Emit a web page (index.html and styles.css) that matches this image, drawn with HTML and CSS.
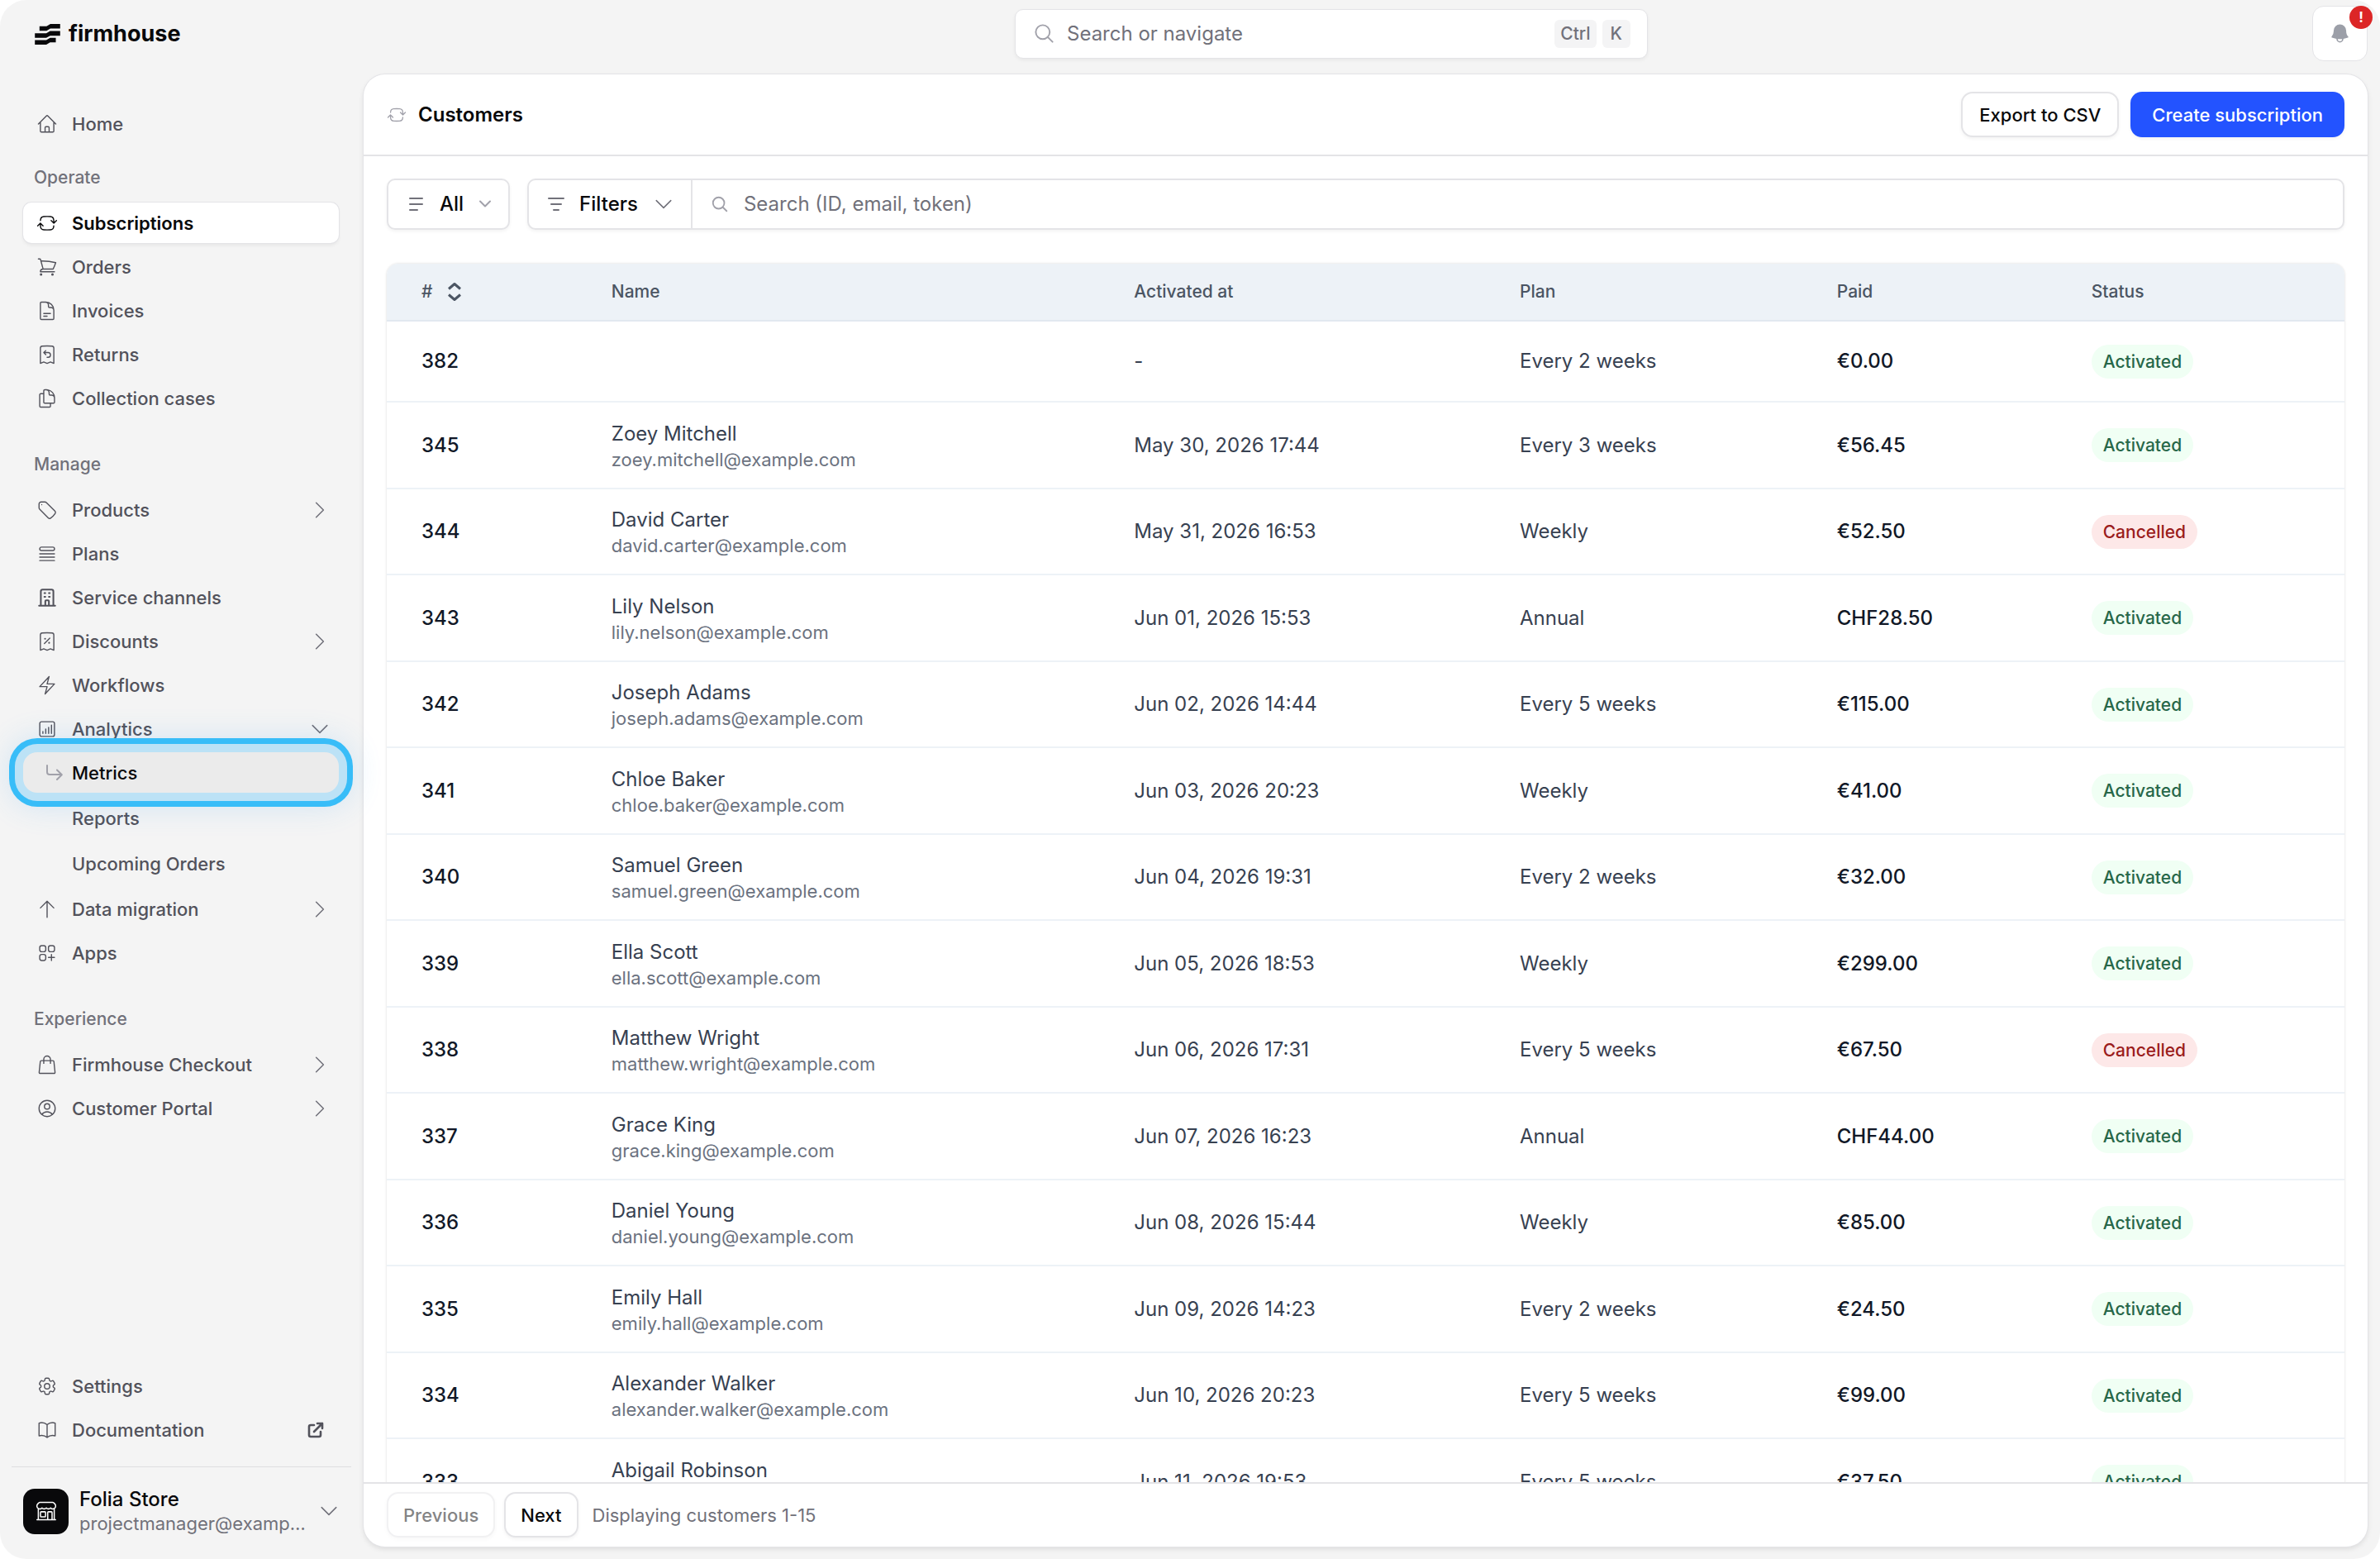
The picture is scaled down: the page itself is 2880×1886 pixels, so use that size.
FILE: index.html
```html
<!DOCTYPE html>
<html lang="en">
<head>
<meta charset="utf-8">
<title>Customers</title>
<meta name="viewport" content="width=device-width, initial-scale=1">
<link rel="stylesheet" href="styles.css">
</head>
<body>
<svg class="sprite" aria-hidden="true">
  <symbol id="i-home" viewBox="0 0 24 24"><path d="m2.25 12 8.954-8.955c.44-.439 1.152-.439 1.591 0L21.75 12M4.5 9.75v10.125c0 .621.504 1.125 1.125 1.125H9.75v-4.875c0-.621.504-1.125 1.125-1.125h2.25c.621 0 1.125.504 1.125 1.125V21h4.125c.621 0 1.125-.504 1.125-1.125V9.75M8.25 21h8.25"/></symbol>
  <symbol id="i-cycle" viewBox="0 0 24 24"><path d="M19.5 12c0-1.232-.046-2.453-.138-3.662a4.006 4.006 0 0 0-3.7-3.7 48.678 48.678 0 0 0-7.324 0 4.006 4.006 0 0 0-3.7 3.7c-.017.22-.032.441-.046.662M19.5 12l3-3m-3 3-3-3m-12 3c0 1.232.046 2.453.138 3.662a4.006 4.006 0 0 0 3.7 3.7 48.656 48.656 0 0 0 7.324 0 4.006 4.006 0 0 0 3.7-3.7c.017-.22.032-.441.046-.662M4.5 12l3 3m-3-3-3 3"/></symbol>
  <symbol id="i-cart" viewBox="0 0 24 24"><path d="M2.25 3h1.386c.51 0 .955.343 1.087.835l.383 1.437M7.5 14.25a3 3 0 0 0-3 3h15.75m-12.75-3h11.218c1.121-2.3 2.1-4.684 2.924-7.138a60.114 60.114 0 0 0-16.536-1.84M7.5 14.25 5.106 5.272M6 20.25a.75.75 0 1 1-1.5 0 .75.75 0 0 1 1.5 0Zm12.75 0a.75.75 0 1 1-1.5 0 .75.75 0 0 1 1.5 0Z"/></symbol>
  <symbol id="i-doc" viewBox="0 0 24 24"><path d="M19.5 14.25v-2.625a3.375 3.375 0 0 0-3.375-3.375h-1.5A1.125 1.125 0 0 1 13.5 7.125v-1.5a3.375 3.375 0 0 0-3.375-3.375H8.25m0 12.75h7.5m-7.5 3H12M10.5 2.25H5.625c-.621 0-1.125.504-1.125 1.125v17.25c0 .621.504 1.125 1.125 1.125h12.75c.621 0 1.125-.504 1.125-1.125V11.25a9 9 0 0 0-9-9Z"/></symbol>
  <symbol id="i-refund" viewBox="0 0 24 24"><path d="M8.25 9.75h4.875a2.625 2.625 0 0 1 0 5.25H12M8.25 9.75 10.5 7.5M8.25 9.75 10.5 12m9-7.243V21.75l-3.75-1.5-3.75 1.5-3.75-1.5-3.75 1.5V4.757c0-1.108.806-2.057 1.907-2.185a48.507 48.507 0 0 1 11.186 0c1.1.128 1.907 1.077 1.907 2.185Z"/></symbol>
  <symbol id="i-docs" viewBox="0 0 24 24"><path d="M15.75 17.25v3.375c0 .621-.504 1.125-1.125 1.125h-9.75a1.125 1.125 0 0 1-1.125-1.125V7.875c0-.621.504-1.125 1.125-1.125H6.75a9.06 9.06 0 0 1 1.5.124m7.5 10.376h3.375c.621 0 1.125-.504 1.125-1.125V11.25c0-4.46-3.243-8.161-7.5-8.876a9.06 9.06 0 0 0-1.5-.124H9.375c-.621 0-1.125.504-1.125 1.125v3.5m7.5 10.375H9.375a1.125 1.125 0 0 1-1.125-1.125v-9.25m12 6.625v-1.875a3.375 3.375 0 0 0-3.375-3.375h-1.5a1.125 1.125 0 0 1-1.125-1.125v-1.5a3.375 3.375 0 0 0-3.375-3.375H9.75"/></symbol>
  <symbol id="i-tag" viewBox="0 0 24 24"><path d="M9.568 3H5.25A2.25 2.25 0 0 0 3 5.25v4.318c0 .597.237 1.17.659 1.591l9.581 9.581c.699.699 1.78.872 2.607.33a18.095 18.095 0 0 0 5.223-5.223c.542-.827.369-1.908-.33-2.607L11.16 3.66A2.25 2.25 0 0 0 9.568 3Z"/><path d="M6 6h.008v.008H6V6Z"/></symbol>
  <symbol id="i-list" viewBox="0 0 24 24"><path d="M3.75 12h16.5m-16.5 3.75h16.5M3.75 19.5h16.5M5.625 4.5h12.75a1.875 1.875 0 0 1 0 3.75H5.625a1.875 1.875 0 0 1 0-3.75Z"/></symbol>
  <symbol id="i-office" viewBox="0 0 24 24"><path stroke-width="1.9" d="M19 21V5a2 2 0 0 0-2-2H7a2 2 0 0 0-2 2v16m14 0h2m-2 0h-5m-9 0H3m2 0h5M9 7h1m-1 4h1m4-4h1m-1 4h1m-5 10v-5a1 1 0 0 1 1-1h2a1 1 0 0 1 1 1v5m-4 0h4"/></symbol>
  <symbol id="i-percent" viewBox="0 0 24 24"><path d="m9 14.25 6-6m4.5-3.493V21.75l-3.75-1.5-3.75 1.5-3.75-1.5-3.75 1.5V4.757c0-1.108.806-2.057 1.907-2.185a48.507 48.507 0 0 1 11.186 0c1.1.128 1.907 1.077 1.907 2.185ZM9.75 9h.008v.008H9.75V9Zm.375 0a.375.375 0 1 1-.75 0 .375.375 0 0 1 .75 0Zm4.125 4.5h.008v.008h-.008V13.5Zm.375 0a.375.375 0 1 1-.75 0 .375.375 0 0 1 .75 0Z"/></symbol>
  <symbol id="i-bolt" viewBox="0 0 24 24"><path d="m3.75 13.5 10.5-11.25L12 10.5h8.25L9.75 21.75 12 13.5H3.75Z"/></symbol>
  <symbol id="i-chart" viewBox="0 0 24 24"><rect x="3.8" y="3.8" width="16.4" height="16.4" rx="2"/><path d="M7.3 14.8v2M10.5 12v4.8M13.7 10.2v6.6M16.9 7.6v9.2"/></symbol>
  <symbol id="i-sub" viewBox="0 0 20 20"><path stroke-width="2" d="M1 1v8a3 3 0 0 0 3 3h14.5M13 6.5l5.8 5.7L13 18"/></symbol>
  <symbol id="i-up" viewBox="0 0 24 24"><path d="M4.5 10.5 12 3l7.5 7.5M12 3v18"/></symbol>
  <symbol id="i-apps" viewBox="0 0 24 24"><path d="M13.5 16.875h3.375m0 0h3.375m-3.375 0V13.5m0 3.375v3.375M6 10.5h2.25a2.25 2.25 0 0 0 2.25-2.25V6a2.25 2.25 0 0 0-2.25-2.25H6A2.25 2.25 0 0 0 3.75 6v2.25A2.25 2.25 0 0 0 6 10.5Zm0 9.75h2.25A2.25 2.25 0 0 0 10.5 18v-2.25a2.25 2.25 0 0 0-2.25-2.25H6a2.25 2.25 0 0 0-2.25 2.25V18A2.25 2.25 0 0 0 6 20.25Zm9.75-9.75H18a2.25 2.25 0 0 0 2.25-2.25V6A2.25 2.25 0 0 0 18 3.75h-2.25A2.25 2.25 0 0 0 13.5 6v2.25a2.25 2.25 0 0 0 2.25 2.25Z"/></symbol>
  <symbol id="i-bag" viewBox="0 0 24 24"><path d="M15.75 10.5V6a3.75 3.75 0 1 0-7.5 0v4.5m11.356-1.993 1.263 12c.07.665-.45 1.243-1.119 1.243H4.25a1.125 1.125 0 0 1-1.12-1.243l1.264-12A1.125 1.125 0 0 1 5.513 7.5h12.974c.576 0 1.059.435 1.119 1.007Z"/></symbol>
  <symbol id="i-user" viewBox="0 0 24 24"><path d="M17.982 18.725A7.488 7.488 0 0 0 12 15.75a7.488 7.488 0 0 0-5.982 2.975m11.963 0a9 9 0 1 0-11.963 0m11.963 0A8.966 8.966 0 0 1 12 21a8.966 8.966 0 0 1-5.982-2.275M15 9.75a3 3 0 1 1-6 0 3 3 0 0 1 6 0Z"/></symbol>
  <symbol id="i-cog" viewBox="0 0 24 24"><path d="M9.594 3.94c.09-.542.56-.94 1.11-.94h2.593c.55 0 1.02.398 1.11.94l.213 1.281c.063.374.313.686.645.87.074.04.147.083.22.127.325.196.72.257 1.075.124l1.217-.456a1.125 1.125 0 0 1 1.37.49l1.296 2.247a1.125 1.125 0 0 1-.26 1.431l-1.003.827c-.293.241-.438.613-.43.992a7.723 7.723 0 0 1 0 .255c-.008.378.137.75.43.991l1.004.827c.424.35.534.955.26 1.43l-1.298 2.247a1.125 1.125 0 0 1-1.369.491l-1.217-.456c-.355-.133-.75-.072-1.076.124a6.47 6.47 0 0 1-.22.128c-.331.183-.581.495-.644.869l-.213 1.281c-.09.543-.56.94-1.11.94h-2.594c-.55 0-1.019-.398-1.11-.94l-.213-1.281c-.062-.374-.312-.686-.644-.87a6.52 6.52 0 0 1-.22-.127c-.325-.196-.72-.257-1.076-.124l-1.217.456a1.125 1.125 0 0 1-1.369-.49l-1.297-2.247a1.125 1.125 0 0 1 .26-1.431l1.004-.827c.292-.24.437-.613.43-.991a6.932 6.932 0 0 1 0-.255c.007-.38-.138-.751-.43-.992l-1.004-.827a1.125 1.125 0 0 1-.26-1.43l1.297-2.247a1.125 1.125 0 0 1 1.37-.491l1.216.456c.356.133.751.072 1.076-.124.072-.044.146-.086.22-.128.332-.183.582-.495.644-.869l.214-1.28Z"/><path d="M15 12a3 3 0 1 1-6 0 3 3 0 0 1 6 0Z"/></symbol>
  <symbol id="i-book" viewBox="0 0 24 24"><path d="M12 6.042A8.967 8.967 0 0 0 6 3.75c-1.052 0-2.062.18-3 .512v14.25A8.987 8.987 0 0 1 6 18c2.305 0 4.408.867 6 2.292m0-14.25a8.966 8.966 0 0 1 6-2.292c1.052 0 2.062.18 3 .512v14.25A8.987 8.987 0 0 0 18 18a8.967 8.967 0 0 0-6 2.292m0-14.25v14.25"/></symbol>
  <symbol id="i-external" viewBox="0 0 24 24"><path stroke-width="2.6" d="M10 6H6a2 2 0 0 0-2 2v10a2 2 0 0 0 2 2h10a2 2 0 0 0 2-2v-4M14 4h6m0 0v6m0-6L10 14"/></symbol>
  <symbol id="i-right" viewBox="0 0 24 24"><path d="m8.25 4.5 7.5 7.5-7.5 7.5"/></symbol>
  <symbol id="i-down" viewBox="0 0 24 24"><path d="m19.5 8.25-7.5 7.5-7.5-7.5"/></symbol>
  <symbol id="i-search" viewBox="0 0 24 24"><path d="m21 21-5.197-5.197m0 0A7.5 7.5 0 1 0 5.196 5.196a7.5 7.5 0 0 0 10.607 10.607Z"/></symbol>
  <symbol id="i-store" viewBox="0 0 24 24"><path d="M13.5 21v-7.5a.75.75 0 0 1 .75-.75h3a.75.75 0 0 1 .75.75V21m-4.5 0H2.36m11.14 0H18m0 0h3.64m-1.39 0V9.349M3.75 21V9.349m0 0a3.001 3.001 0 0 0 3.75-.615A2.993 2.993 0 0 0 9.75 9.75c.896 0 1.7-.393 2.25-1.016a2.993 2.993 0 0 0 2.25 1.016c.896 0 1.7-.393 2.25-1.015a3.001 3.001 0 0 0 3.75.614m-16.5 0a3.004 3.004 0 0 1-.621-4.72l1.189-1.19A1.5 1.5 0 0 1 5.378 3h13.243a1.5 1.5 0 0 1 1.06.44l1.19 1.189a3 3 0 0 1-.621 4.72M6.75 18h3.75a.75.75 0 0 0 .75-.75V13.5a.75.75 0 0 0-.75-.75H6.75a.75.75 0 0 0-.75.75v3.75c0 .414.336.75.75.75Z"/></symbol>
</svg>

<div class="app">
  <aside class="sidebar">
    <a class="brand" href="#" aria-label="firmhouse">
      <svg class="brand-mark" viewBox="126 85 93 76" aria-hidden="true"><path d="M143 93h26l14-8h36v17h-36l-14 8h-26zM126 119h42l14-8h37v17h-37l-14 8h-42zM126 144h42l14-8h21v17h-21l-14 8h-42z"/></svg>
      <span class="brand-name">firmhouse</span>
    </a>

    <nav class="nav" aria-label="Main">
      <div class="nav-group">
        <a class="nav-item" href="#"><svg class="icon"><use href="#i-home"/></svg><span>Home</span></a>
      </div>
      <h2 class="nav-label first">Operate</h2>
      <div class="nav-group">
        <a class="nav-item active" href="#"><svg class="icon"><use href="#i-cycle"/></svg><span>Subscriptions</span></a>
        <a class="nav-item" href="#"><svg class="icon"><use href="#i-cart"/></svg><span>Orders</span></a>
        <a class="nav-item" href="#"><svg class="icon"><use href="#i-doc"/></svg><span>Invoices</span></a>
        <a class="nav-item" href="#"><svg class="icon"><use href="#i-refund"/></svg><span>Returns</span></a>
        <a class="nav-item" href="#"><svg class="icon"><use href="#i-docs"/></svg><span>Collection cases</span></a>
      </div>
      <h2 class="nav-label">Manage</h2>
      <div class="nav-group">
        <a class="nav-item" href="#"><svg class="icon"><use href="#i-tag"/></svg><span>Products</span><svg class="chevron"><use href="#i-right"/></svg></a>
        <a class="nav-item" href="#"><svg class="icon"><use href="#i-list"/></svg><span>Plans</span></a>
        <a class="nav-item" href="#"><svg class="icon"><use href="#i-office"/></svg><span>Service channels</span></a>
        <a class="nav-item" href="#"><svg class="icon"><use href="#i-percent"/></svg><span>Discounts</span><svg class="chevron"><use href="#i-right"/></svg></a>
        <a class="nav-item" href="#"><svg class="icon"><use href="#i-bolt"/></svg><span>Workflows</span></a>
        <a class="nav-item" href="#"><svg class="icon"><use href="#i-chart"/></svg><span>Analytics</span><svg class="chevron"><use href="#i-down"/></svg></a>
        <div class="nav-sub">
          <a class="nav-item sub highlight" href="#"><svg class="sub-arrow"><use href="#i-sub"/></svg><span>Metrics</span></a>
          <a class="nav-item sub" href="#"><span>Reports</span></a>
          <a class="nav-item sub" href="#"><span>Upcoming Orders</span></a>
        </div>
        <a class="nav-item" href="#"><svg class="icon"><use href="#i-up"/></svg><span>Data migration</span><svg class="chevron"><use href="#i-right"/></svg></a>
        <a class="nav-item" href="#"><svg class="icon"><use href="#i-apps"/></svg><span>Apps</span></a>
      </div>
      <h2 class="nav-label">Experience</h2>
      <div class="nav-group">
        <a class="nav-item" href="#"><svg class="icon"><use href="#i-bag"/></svg><span>Firmhouse Checkout</span><svg class="chevron"><use href="#i-right"/></svg></a>
        <a class="nav-item" href="#"><svg class="icon"><use href="#i-user"/></svg><span>Customer Portal</span><svg class="chevron"><use href="#i-right"/></svg></a>
      </div>
    </nav>

    <nav class="nav-group nav-bottom" aria-label="Support">
      <a class="nav-item" href="#"><svg class="icon"><use href="#i-cog"/></svg><span>Settings</span></a>
      <a class="nav-item" href="#"><svg class="icon"><use href="#i-book"/></svg><span>Documentation</span><svg class="external"><use href="#i-external"/></svg></a>
    </nav>

    <button class="account" type="button">
      <span class="avatar"><svg><use href="#i-store"/></svg></span>
      <span class="account-text"><span class="account-name">Folia Store</span><span class="account-mail">projectmanager@example.com</span></span>
      <svg class="chevron"><use href="#i-down"/></svg>
    </button>
  </aside>

  <div class="content">
    <header class="topbar">
      <div class="topbar-center">
        <label class="command">
          <svg class="command-icon"><use href="#i-search"/></svg>
          <input type="text" placeholder="Search or navigate" aria-label="Search or navigate">
          <kbd>Ctrl</kbd><kbd>K</kbd>
        </label>
      </div>
      <button class="bell" type="button" aria-label="Notifications">
        <svg viewBox="0 0 24 24" aria-hidden="true"><path d="M5.25 9a6.75 6.75 0 0 1 13.5 0v.75c0 2.123.8 4.057 2.118 5.52a.75.75 0 0 1-.297 1.206c-1.544.57-3.16.99-4.831 1.243a3.75 3.75 0 1 1-7.48 0 24.585 24.585 0 0 1-4.831-1.244.75.75 0 0 1-.298-1.205A8.217 8.217 0 0 0 5.25 9.75V9Zm4.502 8.9a2.25 2.25 0 1 0 4.496 0 25.057 25.057 0 0 1-4.496 0Z"/></svg>
        <span class="bell-badge">!</span>
      </button>
    </header>

    <main class="panel">
      <header class="panel-head">
        <svg class="title-icon"><use href="#i-cycle"/></svg>
        <h1>Customers</h1>
        <button class="btn" type="button">Export to CSV</button>
        <button class="btn primary" type="button">Create subscription</button>
      </header>

      <div class="panel-body">
        <div class="toolbar">
          <button class="box view" type="button">
            <svg class="bars" viewBox="0 0 22 18" aria-hidden="true"><path d="M2 2h15M2 9h15M2 16h9"/></svg>
            <span>All</span>
            <svg class="caret" viewBox="0 0 16 10" aria-hidden="true"><path d="m2 1.5 6 6 6-6"/></svg>
          </button>
          <div class="box search">
            <button class="filters" type="button">
              <svg class="bars" viewBox="0 0 22 18" aria-hidden="true"><path d="M2 2h18M5 9h12M8 16h6"/></svg>
              <span>Filters</span>
              <svg class="chevron"><use href="#i-down"/></svg>
            </button>
            <label class="query">
              <svg class="query-icon"><use href="#i-search"/></svg>
              <input type="text" placeholder="Search (ID, email, token)" aria-label="Search customers">
            </label>
          </div>
        </div>

        <table class="table">
          <colgroup><col class="c-id"><col class="c-name"><col class="c-date"><col class="c-plan"><col class="c-paid"><col></colgroup>
          <thead>
            <tr>
              <th scope="col"><button class="sort" type="button">#<svg viewBox="0 0 18 24" aria-hidden="true"><path d="m2 8.5 7-6 7 6M2 15.5l7 6 7-6"/></svg></button></th>
              <th scope="col">Name</th><th scope="col">Activated at</th><th scope="col">Plan</th><th scope="col">Paid</th><th scope="col">Status</th>
            </tr>
          </thead>
          <tbody>
            <tr><td class="strong">382</td><td></td><td>-</td><td>Every 2 weeks</td><td class="strong">€0.00</td><td><span class="pill">Activated</span></td></tr>
            <tr><td class="strong">345</td><td><div class="who">Zoey Mitchell</div><div class="mail">zoey.mitchell@example.com</div></td><td>May 30, 2026 17:44</td><td>Every 3 weeks</td><td class="strong">€56.45</td><td><span class="pill">Activated</span></td></tr>
            <tr><td class="strong">344</td><td><div class="who">David Carter</div><div class="mail">david.carter@example.com</div></td><td>May 31, 2026 16:53</td><td>Weekly</td><td class="strong">€52.50</td><td><span class="pill cancelled">Cancelled</span></td></tr>
            <tr><td class="strong">343</td><td><div class="who">Lily Nelson</div><div class="mail">lily.nelson@example.com</div></td><td>Jun 01, 2026 15:53</td><td>Annual</td><td class="strong">CHF28.50</td><td><span class="pill">Activated</span></td></tr>
            <tr><td class="strong">342</td><td><div class="who">Joseph Adams</div><div class="mail">joseph.adams@example.com</div></td><td>Jun 02, 2026 14:44</td><td>Every 5 weeks</td><td class="strong">€115.00</td><td><span class="pill">Activated</span></td></tr>
            <tr><td class="strong">341</td><td><div class="who">Chloe Baker</div><div class="mail">chloe.baker@example.com</div></td><td>Jun 03, 2026 20:23</td><td>Weekly</td><td class="strong">€41.00</td><td><span class="pill">Activated</span></td></tr>
            <tr><td class="strong">340</td><td><div class="who">Samuel Green</div><div class="mail">samuel.green@example.com</div></td><td>Jun 04, 2026 19:31</td><td>Every 2 weeks</td><td class="strong">€32.00</td><td><span class="pill">Activated</span></td></tr>
            <tr><td class="strong">339</td><td><div class="who">Ella Scott</div><div class="mail">ella.scott@example.com</div></td><td>Jun 05, 2026 18:53</td><td>Weekly</td><td class="strong">€299.00</td><td><span class="pill">Activated</span></td></tr>
            <tr><td class="strong">338</td><td><div class="who">Matthew Wright</div><div class="mail">matthew.wright@example.com</div></td><td>Jun 06, 2026 17:31</td><td>Every 5 weeks</td><td class="strong">€67.50</td><td><span class="pill cancelled">Cancelled</span></td></tr>
            <tr><td class="strong">337</td><td><div class="who">Grace King</div><div class="mail">grace.king@example.com</div></td><td>Jun 07, 2026 16:23</td><td>Annual</td><td class="strong">CHF44.00</td><td><span class="pill">Activated</span></td></tr>
            <tr><td class="strong">336</td><td><div class="who">Daniel Young</div><div class="mail">daniel.young@example.com</div></td><td>Jun 08, 2026 15:44</td><td>Weekly</td><td class="strong">€85.00</td><td><span class="pill">Activated</span></td></tr>
            <tr><td class="strong">335</td><td><div class="who">Emily Hall</div><div class="mail">emily.hall@example.com</div></td><td>Jun 09, 2026 14:23</td><td>Every 2 weeks</td><td class="strong">€24.50</td><td><span class="pill">Activated</span></td></tr>
            <tr><td class="strong">334</td><td><div class="who">Alexander Walker</div><div class="mail">alexander.walker@example.com</div></td><td>Jun 10, 2026 20:23</td><td>Every 5 weeks</td><td class="strong">€99.00</td><td><span class="pill">Activated</span></td></tr>
            <tr><td class="strong">333</td><td><div class="who">Abigail Robinson</div><div class="mail">abigail.robinson@example.com</div></td><td>Jun 11, 2026 19:53</td><td>Every 5 weeks</td><td class="strong">€37.50</td><td><span class="pill">Activated</span></td></tr>
          </tbody>
        </table>
      </div>

      <footer class="pager">
        <button class="btn" type="button" disabled>Previous</button>
        <button class="btn" type="button">Next</button>
        <span>Displaying customers 1-15</span>
      </footer>
    </main>
  </div>
</div>
</body>
</html>
```
FILE: styles.css
```css
*, *::before, *::after { box-sizing: border-box; }

:root {
  --bg: #f4f4f4;
  --line: #e4e4e7;
  --ink: #09090b;
  --muted: #71717a;
  --nav: #52525b;
  --soft: #a1a1aa;
  --shadow: 0 2px 4px rgba(0, 0, 0, 0.05);
}

body {
  margin: 0;
  background: #fff;
  color: var(--ink);
  font-family: Inter, "Liberation Sans", sans-serif;
  font-size: 24px;
  line-height: 34px;
}

h1, h2 { margin: 0; font-size: inherit; }
a { color: inherit; text-decoration: none; }
button, input, kbd { font: inherit; color: inherit; }
button { margin: 0; padding: 0; border: 0; background: none; text-align: left; cursor: pointer; }
input { flex: 1; min-width: 0; padding: 0; border: 0; outline: 0; background: none; }
input::placeholder { color: var(--muted); opacity: 1; }

svg { flex: none; fill: none; stroke: currentColor; stroke-width: 1.3; stroke-linecap: round; stroke-linejoin: round; }
.sprite { position: absolute; width: 0; height: 0; }

.app {
  display: grid;
  grid-template-columns: 440px minmax(0, 1fr);
  height: 100vh;
  border-radius: 32px;
  background: var(--bg);
}

/* Sidebar */
.sidebar { display: flex; flex-direction: column; min-height: 0; padding-bottom: 29px; }
.brand { display: flex; align-items: center; gap: 10px; height: 82px; padding-left: 42px; }
.brand-mark { width: 31px; height: 25px; fill: var(--ink); stroke: none; }
.brand-name { font-size: 27px; font-weight: 700; }

.nav { flex: 1; padding: 43px 30px 0 28px; }
.nav-group { display: flex; flex-direction: column; gap: 4px; }
.nav-label {
  margin: 42px 0 16px 13px;
  color: var(--muted);
  font-size: 21px;
  font-weight: 500;
  line-height: 28px;
}
.nav-label.first { margin-top: 27px; }
.nav-item {
  display: flex;
  align-items: center;
  gap: 17px;
  height: 49px;
  padding: 0 9px 0 16px;
  border-radius: 10px;
  color: var(--nav);
  font-size: 22px;
  font-weight: 500;
}
.icon { width: 26px; height: 26px; }
.chevron { width: 28px; height: 28px; margin-left: auto; color: var(--muted); }
.external { width: 24px; height: 24px; margin: 0 7px 0 auto; }
.nav-item.active {
  background: #fff;
  color: var(--ink);
  font-weight: 600;
  box-shadow: 0 0 0 1px var(--line), 0 3px 4px rgba(0, 0, 0, 0.06);
}
.nav-sub { display: flex; flex-direction: column; gap: 6px; padding-bottom: 2px; }
.nav-item.sub { gap: 11px; padding-left: 59px; }
.nav-item.highlight {
  position: relative;
  z-index: 1;
  padding-left: 28px;
  border-radius: 17px;
  background: #ebebeb;
  color: var(--ink);
  box-shadow: 0 0 0 10px #bce2f6, 0 0 0 17px #38bdf8, 0 0 36px 18px rgba(56, 160, 248, 0.16);
}
.sub-arrow { width: 20px; height: 20px; color: var(--soft); }
.nav-bottom { padding: 0 30px 0 28px; }

.account {
  display: flex;
  align-items: center;
  gap: 10px;
  margin: 20px 15px 0 14px;
  padding: 24px 13px 0 14px;
  border-top: 1px solid #dedee0;
}
.avatar { display: grid; place-items: center; width: 55px; height: 55px; margin-right: 3px; border-radius: 14px; background: var(--ink); color: #fff; }
.avatar svg { width: 28px; height: 28px; }
.account-text { flex: 1; min-width: 0; }
.account-text span { display: block; overflow: hidden; text-overflow: ellipsis; white-space: nowrap; }
.account-name { font-weight: 500; line-height: 30px; }
.account-mail { color: var(--muted); font-size: 22px; line-height: 28px; }

/* Top bar */
.content { display: flex; flex-direction: column; min-width: 0; min-height: 0; padding: 0 15px 15px 0; }
.topbar { display: flex; align-items: center; gap: 16px; padding: 7px 0 16px; }
.topbar-center { display: flex; flex: 1; justify-content: center; }
.command {
  display: flex;
  align-items: center;
  gap: 7px;
  width: 766px;
  height: 60px;
  padding: 0 20px 0 21px;
  border: 1px solid var(--line);
  border-radius: 10px;
  background: #fff;
  box-shadow: var(--shadow);
}
.command input { margin-left: 7px; }
.command-icon { width: 27px; height: 27px; color: var(--soft); stroke-width: 1.7; }
kbd {
  padding: 0 7px;
  border-radius: 6px;
  background: #f4f4f5;
  color: var(--muted);
  font-size: 21px;
  font-weight: 500;
}
kbd + kbd { padding: 0 10px; }
.bell {
  position: relative;
  display: grid;
  place-items: center;
  width: 67px;
  height: 67px;
  border: 1px solid var(--line);
  border-radius: 14px;
  background: #fff;
}
.bell svg { width: 27px; height: 27px; fill: #9c9fa8; stroke: none; }
.bell-badge {
  position: absolute;
  top: -1px;
  right: -7px;
  width: 28px;
  height: 28px;
  border-radius: 50%;
  background: #dc2626;
  color: #fff;
  font-size: 17px;
  font-weight: 700;
  line-height: 28px;
  text-align: center;
}

/* Panel */
.panel {
  display: flex;
  flex: 1;
  flex-direction: column;
  min-height: 0;
  overflow: hidden;
  border-radius: 26px;
  background: #fff;
  box-shadow: 0 0 0 1px var(--line), 0 3px 6px rgba(0, 0, 0, 0.1);
}
.panel-head {
  display: flex;
  align-items: center;
  gap: 14px;
  padding: 21px 28px;
  border-bottom: 2px solid var(--line);
}
.panel-head h1 { flex: 1; font-weight: 600; }
.title-icon { width: 24px; height: 24px; color: var(--soft); }
.btn {
  height: 55px;
  padding: 0 20px;
  border: 2px solid var(--line);
  border-radius: 14px;
  background: #fff;
  font-size: 22px;
  font-weight: 500;
  box-shadow: var(--shadow);
}
.btn.primary { padding: 0 26px; border: 0; background: #2353ff; color: #fff; }
.panel-body { flex: 1; min-height: 0; overflow: auto; padding: 27px 28px 0; scrollbar-width: none; }

.toolbar { display: flex; gap: 21px; margin-bottom: 41px; font-weight: 500; }
.box {
  display: flex;
  align-items: center;
  height: 62px;
  border: 2px solid var(--line);
  border-radius: 10px;
  background: #fff;
  box-shadow: var(--shadow);
}
.bars { width: 22px; height: 18px; color: var(--muted); stroke-width: 2; }
.view { gap: 16px; padding: 0 20px 0 24px; }
.caret { width: 16px; height: 10px; margin-left: 2px; color: var(--soft); stroke-width: 2; }
.search { flex: 1; }
.filters { display: flex; align-items: center; gap: 17px; align-self: stretch; padding: 0 19px 0 22px; border-right: 2px solid var(--line); }
.query { display: flex; flex: 1; align-items: center; gap: 18px; padding: 0 22px; font-weight: 400; }
.query-icon { width: 22px; height: 22px; color: var(--soft); stroke-width: 2; }

.table {
  width: 100%;
  table-layout: fixed;
  border-collapse: separate;
  border-spacing: 0;
  border-radius: 14px 14px 0 0;
  box-shadow: 0 0 3px rgba(0, 0, 0, 0.16);
}
.c-id { width: 9.7%; }
.c-name { width: 26.7%; }
.c-date { width: 19.7%; }
.c-plan { width: 16.2%; }
.c-paid { width: 13%; }
.table th, .table td { padding: 0 42px; text-align: left; vertical-align: middle; }
.table th {
  height: 70px;
  border-bottom: 2px solid #e2e8f0;
  background: #edf2f7;
  color: #4b5563;
  font-size: 21px;
  font-weight: 500;
}
.table th:first-child { border-top-left-radius: 14px; }
.table th:last-child { border-top-right-radius: 14px; }
.table td { height: 105px; border-bottom: 2px solid #edf2f7; color: #374151; }
.table tr:nth-child(odd) td { height: 104px; }
.table tbody tr:first-child td { height: 98px; }
.table td.strong { color: #111827; font-weight: 500; }
.sort { display: flex; align-items: center; gap: 18px; }
.sort svg { width: 18px; height: 24px; stroke-width: 3; stroke-linecap: butt; }
.who { line-height: 34px; }
.mail { color: #6b7280; font-size: 22px; line-height: 28px; }
.pill {
  display: inline-block;
  height: 41px;
  padding: 0 14px;
  border-radius: 21px;
  background: #f0fff4;
  color: #276749;
  font-size: 21px;
  font-weight: 500;
  line-height: 41px;
  vertical-align: middle;
}
.pill.cancelled { background: #fde8e8; color: #9b1c1c; }

.pager {
  display: flex;
  align-items: center;
  gap: 11px;
  padding: 10px 28px 11px;
  border-top: 2px solid var(--line);
  color: var(--muted);
  font-size: 22px;
}
.pager .btn { padding: 0 18px; color: var(--ink); }
.pager .btn:disabled { opacity: 0.5; }
.pager span { margin-left: 6px; }
```
